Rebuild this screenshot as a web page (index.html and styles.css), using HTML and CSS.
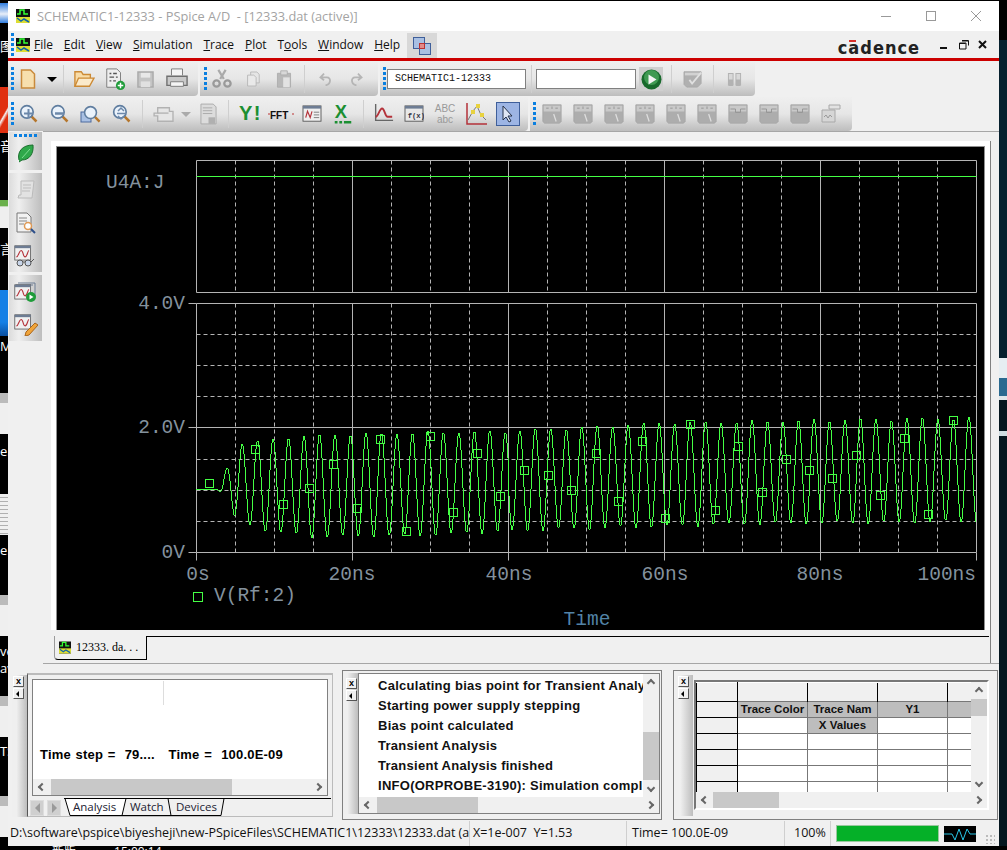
FILE: index.html
```html
<!DOCTYPE html>
<html lang="en">
<head>
    <meta charset="UTF-8">
    <meta name="viewport" content="width=device-width, initial-scale=1.0">
    <title>SCHEMATIC1-12333 - PSpice A/D</title>
    <link rel="stylesheet" href="styles.css">
</head>
<body>
    <svg class="defs" width="0" height="0">
        <symbol id="i-app" viewBox="0 0 14 14">
            <rect width="14" height="14" fill="#111"/>
            <path d="M1 5h3V1h4v4h4" fill="none" stroke="#3f3" stroke-width="1.5"/>
            <path d="M0 8h14v6H0z" fill="#dd3"/>
            <path d="M1 9l4 3 3-2 5 3" fill="none" stroke="#16a" stroke-width="1.5"/>
        </symbol>
        <symbol id="i-mag" viewBox="0 0 24 24">
            <path d="M14 14l7 7" stroke="#b5762c" stroke-width="3"/>
            <circle cx="9.500" cy="9.500" r="7.500" fill="#eaf2fb" stroke="#5f7d9f" stroke-width="2"/>
        </symbol>
        <symbol id="i-plot" viewBox="0 0 24 24">
            <rect x="1" y="1" width="20" height="18" fill="#f1f1f1" stroke="#555"/>
            <rect x="1" y="1" width="20" height="3" fill="#6d7c93"/>
            <path d="M3 15c3 0 3-8 6-8s2 8 5 8 3-8 5-8" fill="none" stroke="#b4323a" stroke-width="1.400"/>
        </symbol>
        <symbol id="i-meter" viewBox="0 0 24 24">
            <path d="M1 1h22v20l-2 2H3l-2-2z" fill="#adadad" stroke="#a6a6a6"/>
            <path d="M2 2h20v7H2z" fill="#c9c9c9"/>
            <path d="M12 3v3M5 5h3M16 5h3" stroke="#8e8e8e"/>
            <path d="M14 12l3 9" stroke="#dedede" stroke-width="1.500"/>
        </symbol>
        <symbol id="i-meter2" viewBox="0 0 24 24">
            <path d="M1 1h22v20l-2 2H3l-2-2z" fill="#adadad" stroke="#a6a6a6"/>
            <path d="M2 2h20v7H2z" fill="#c9c9c9"/>
            <path d="M3 6h6v4h6V6h6" fill="none" stroke="#8e8e8e"/>
        </symbol>
    </svg>

    <div class="screen">
        <div class="desk-left">
            <div class="bit blue-dot mt-3"></div>
            <div class="bit label mt-15">图</div>
            <div class="bit red-tile mt-33"></div>
            <div class="bit label mt-5">音</div>
            <div class="bit app-tile mt-46"></div>
            <div class="bit label mt-13">言</div>
            <div class="bit blue-tile mt-33"></div>
            <div class="bit label mt-2">M</div>
            <div class="bit page mt-39"></div>
            <div class="bit label mt-9">e.</div>
            <div class="bit page striped mt-35"></div>
            <div class="bit label mt-7">e.</div>
            <div class="bit page mt-37"></div>
            <div class="bit label mt-7">ve</div>
            <div class="bit label mt-1">av</div>
            <div class="bit page mt-20"></div>
            <div class="bit label mt-6">TS</div>
            <div class="bit page mt-37"></div>
        </div>

        <div class="window">
            <div class="titlebar">
                <svg class="title-icon"><use href="#i-app"/></svg>
                <span class="title-text">SCHEMATIC1-12333 - PSpice A/D&nbsp; - [12333.dat (active)]</span>
                <div class="win-buttons">
                    <svg width="12" height="12" viewBox="0 0 12 12"><path d="M1 6.500h10" stroke="#999"/></svg>
                    <svg width="12" height="12" viewBox="0 0 12 12"><rect x="1.500" y="1.500" width="9" height="9" fill="none" stroke="#999"/></svg>
                    <svg width="12" height="12" viewBox="0 0 12 12"><path d="M1 1l10 10M11 1L1 11" stroke="#999"/></svg>
                </div>
            </div>

            <div class="menubar">
                <span class="grip-v menu-grip"></span>
                <svg class="menu-icon"><use href="#i-app"/></svg>
                <nav class="menu">
                    <a><u>F</u>ile</a>
                    <a><u>E</u>dit</a>
                    <a><u>V</u>iew</a>
                    <a><u>S</u>imulation</a>
                    <a><u>T</u>race</a>
                    <a><u>P</u>lot</a>
                    <a>T<u>o</u>ols</a>
                    <a><u>W</u>indow</a>
                    <a><u>H</u>elp</a>
                </nav>
                <div class="mdi-restore">
                    <svg width="20" height="20" viewBox="0 0 20 20">
                        <rect x="1.500" y="1.500" width="11" height="11" fill="#a9c0e3" stroke="#3f5f9a"/>
                        <rect x="7.500" y="7.500" width="11" height="11" fill="#a9c0e3" stroke="#3f5f9a"/>
                        <rect x="7.500" y="7.500" width="5" height="5" fill="#e28a8a" stroke="#b33"/>
                    </svg>
                </div>
                <div class="cadence">c<span class="cad-a">a</span>dence</div>
                <div class="mdi-buttons">
                    <svg width="10" height="10" viewBox="0 0 10 10"><path d="M0 8h7" stroke="#111" stroke-width="2"/></svg>
                    <svg width="10" height="10" viewBox="0 0 10 10"><path d="M3 .500h6.500v5M.500 3h6.500v6H.500z" fill="none" stroke="#111"/><path d="M1 3.500h5.500M3 1h6" stroke="#111"/></svg>
                    <svg width="10" height="10" viewBox="0 0 10 10"><path d="M1 1l7 7M8 1L1 8" stroke="#111" stroke-width="2"/></svg>
                </div>
            </div>
            <div class="redline"></div>

            <div class="toolrow row-one">
                <div class="toolgroup w-190">
                    <span class="grip-v"></span>
                    <button class="tool t-pull2"><svg width="16" height="20" viewBox="0 0 16 20"><path d="M1.500 1h9l4 4v14h-13z" fill="#f7dfae" stroke="#c98a3c" stroke-width="1.500"/></svg></button>
                    <button class="tool drop"><span class="caret"></span></button>
                    <span class="sep sep-first"></span>
                    <button class="tool"><svg width="22" height="20" viewBox="0 0 24 22"><path d="M2 19V3h7l2 3h8v4" fill="#f8dca8" stroke="#cc8a35" stroke-width="1.500"/><path d="M2 19l4-9h17l-5 9z" fill="#fbeacb" stroke="#cc8a35" stroke-width="1.500"/></svg></button>
                    <button class="tool"><svg width="22" height="22" viewBox="0 0 24 24"><path d="M3 1h11l4 4v16H3z" fill="#eee" stroke="#777"/><path d="M6 6h2M10 6h4M6 10h5M13 10h2M6 14h2M10 14h3" stroke="#555" stroke-width="1.500"/><circle cx="18" cy="19" r="5" fill="#1f9c3a"/><path d="M15 19h6M18 16v6" stroke="#fff" stroke-width="1.600"/></svg></button>
                    <button class="tool"><svg width="17" height="17" viewBox="0 0 18 18"><path d="M1 1h16v16H1z" fill="#c4c4c4" stroke="#aaa" stroke-width="1.500"/><path d="M4 2h10v5H4z" fill="#e8e8e8"/><path d="M4 11h10v6H4z" fill="#e0e0e0"/></svg></button>
                    <button class="tool"><svg width="22" height="22" viewBox="0 0 24 24"><path d="M6 8V1h12v7" fill="#f5f5f5" stroke="#777"/><path d="M1 9h22v10H1z" fill="#c9c9c9" stroke="#6f6f6f" stroke-width="1.500"/><path d="M5 15h14v5H5z" fill="#f5f5f5" stroke="#777"/></svg></button>
                </div>
                <div class="toolgroup group-in w-178">
                    <span class="grip-v"></span>
                    <button class="tool t-pull1"><svg width="20" height="20" viewBox="0 0 22 22"><path d="M7 1l6 10M15 1L9 11" stroke="#aaa" stroke-width="2.500"/><circle cx="5" cy="16" r="3.500" fill="none" stroke="#9a9a9a" stroke-width="2.500"/><circle cx="17" cy="16" r="3.500" fill="none" stroke="#9a9a9a" stroke-width="2.500"/></svg></button>
                    <button class="tool"><svg width="14" height="16" viewBox="0 0 18 20"><path d="M6 1h8l3 3v11H6z" fill="#e5e5e5" stroke="#b0b0b0"/><path d="M2 5h8l3 3v11H2z" fill="#e9e9e9" stroke="#b0b0b0"/></svg></button>
                    <button class="tool"><svg width="16" height="18" viewBox="0 0 18 22"><path d="M1 4h16v17H1z" fill="#b8b8b8" stroke="#aaa"/><path d="M5 1h8v5H5z" fill="#d8d8d8" stroke="#aaa"/><path d="M8 9h8v12H8z" fill="#e2e2e2"/></svg></button>
                    <span class="sep"></span>
                    <button class="tool"><svg width="13" height="13" viewBox="0 0 18 18"><path d="M7 1L2 6l5 4M2 6h9c6 0 6 10-2 11" fill="none" stroke="#b5b5b5" stroke-width="2.500"/></svg></button>
                    <button class="tool"><svg width="13" height="13" viewBox="0 0 18 18"><path d="M11 1l5 5-5 4M16 6H7C1 6 1 16 9 17" fill="none" stroke="#b5b5b5" stroke-width="2.500"/></svg></button>
                </div>
                <div class="toolgroup w-375">
                    <span class="grip-v"></span>
                    <div class="combo combo-name">SCHEMATIC1-12333</div>
                    <span class="sep sep-combo"></span>
                    <div class="combo combo-empty"></div>
                    <button class="tool run"><svg width="21" height="21" viewBox="0 0 21 21"><circle cx="10.500" cy="10.500" r="10" fill="#186a2c"/><circle cx="10.500" cy="8.500" r="7.500" fill="#3f9a52"/><path d="M7.500 5.500l8 5-8 5z" fill="#f4f4f4"/></svg></button>
                    <span class="sep"></span>
                    <button class="tool"><svg width="20" height="18" viewBox="0 0 22 20"><path d="M1 2h19v13l-4 4H4l-3-3z" fill="#b0b0b0" stroke="#a8a8a8"/><path d="M2 3h17v3H2z" fill="#d2d2d2"/><path d="M7 11l3 4 10-12" fill="none" stroke="#e0e0e0" stroke-width="2"/></svg></button>
                    <span class="sep"></span>
                    <button class="tool"><svg width="15" height="15" viewBox="0 0 16 16"><path d="M1 1h6v13l-1 1H2l-1-1zM9 1h6v13l-1 1h-4l-1-1z" fill="#b2b2b2"/><path d="M2 2h4v6H2zM10 2h4v6h-4z" fill="#d8d8d8"/></svg></button>
                </div>
            </div>

            <div class="toolrow row-two">
                <div class="toolgroup w-520">
                    <span class="grip-v"></span>
                    <button class="tool t-pull1"><svg width="20" height="20"><use href="#i-mag"/><path d="M5 9.500h9M9.500 5v9" stroke="#6c88aa" stroke-width="2"/></svg></button>
                    <button class="tool"><svg width="20" height="20"><use href="#i-mag"/><path d="M5 9.500h9" stroke="#6c88aa" stroke-width="2.500"/></svg></button>
                    <button class="tool"><svg width="22" height="22" viewBox="0 0 22 22"><rect x="1" y="9" width="10" height="10" fill="#a9c0e3" stroke="#4c6a9e"/><use href="#i-mag" x="3" y="2" width="19" height="19"/></svg></button>
                    <button class="tool"><svg width="20" height="20"><use href="#i-mag"/><path d="M6 7l3-3 3 3M6 12l3 3 3-3M5 9.500h9" fill="none" stroke="#6c88aa" stroke-width="1.500"/></svg></button>
                    <span class="sep"></span>
                    <button class="tool"><svg width="22" height="18" viewBox="0 0 24 20"><path d="M1 9h4V3h13v4h4v11H5v-6H1z" fill="#e6e6e6" stroke="#b2b2b2" stroke-width="1.500"/><path d="M5 9h12" stroke="#b2b2b2" stroke-width="1.500"/></svg></button>
                    <button class="tool drop-two"><span class="caret caret-off"></span></button>
                    <button class="tool narrow"><svg width="17" height="22" viewBox="0 0 18 23"><path d="M1 1h13l3 3v18H1z" fill="#dcdcdc" stroke="#aaa"/><path d="M3 5h10M3 8h10M3 11h10" stroke="#aaa"/><path d="M9 15h7v7H9z" fill="#b0b0b0"/></svg></button>
                    <span class="sep"></span>
                    <button class="tool"><svg width="22" height="22" viewBox="0 0 24 22"><text class="ico-y" x="0" y="18">Y</text><text class="ico-y" x="16" y="18">!</text></svg></button>
                    <button class="tool"><svg width="26" height="14" viewBox="0 0 26 14"><path d="M0 7h26" stroke="#b33" stroke-dasharray="2 6"/><text class="ico-fft" x="2" y="12">FFT</text></svg></button>
                    <button class="tool"><svg width="20" height="18" viewBox="0 0 22 20"><rect x="1" y="1" width="20" height="17" fill="#efefef" stroke="#555"/><rect x="1" y="1" width="20" height="3" fill="#6d7c93"/><path d="M4 14l2-7 3 7 2-7" fill="none" stroke="#b4323a" stroke-width="1.300"/><path d="M13 8h6M13 11h6M13 14h6" stroke="#777"/></svg></button>
                    <button class="tool"><svg width="22" height="22" viewBox="0 0 24 24"><text class="ico-x" x="3" y="16">X</text><path d="M3 21h3M8 21h3M13 21h8" stroke="#1b8f32" stroke-width="2.500"/></svg></button>
                    <span class="sep sep-tight"></span>
                    <button class="tool"><svg width="22" height="22" viewBox="0 0 24 24"><path d="M4 1v18h19" fill="none" stroke="#666" stroke-width="1.500"/><path d="M4 15c3 0 4-9 7-9s3 9 6 9h5" fill="none" stroke="#b4323a" stroke-width="2"/></svg></button>
                    <button class="tool"><svg width="20" height="18" viewBox="0 0 22 20"><rect x="1" y="1" width="20" height="17" fill="#e8e8e8" stroke="#555"/><rect x="1" y="1" width="20" height="3" fill="#6d7c93"/><text class="ico-fx" x="4" y="14">f(x)</text></svg></button>
                    <button class="tool"><svg width="24" height="22" viewBox="0 0 24 22"><text class="ico-abc" x="12" y="9">ABC</text><text class="ico-abc" x="12" y="20">abc</text></svg></button>
                    <button class="tool"><svg width="24" height="24" viewBox="0 0 24 24"><path d="M3 1v21h20" fill="none" stroke="#b4323a" stroke-width="1.500"/><path d="M4 18l5-9 4-5 4 9 5 5" fill="none" stroke="#777"/><rect x="7" y="8" width="4" height="4" fill="#e8d23f"/><rect x="12" y="2" width="4" height="4" fill="#e8d23f"/><rect x="16" y="11" width="4" height="4" fill="#e8d23f"/></svg></button>
                    <button class="tool pointer"><svg width="12" height="18" viewBox="0 0 12 18"><path d="M1 1v14l3-3 3 5 2-1-3-5h4z" fill="#dfe6f4" stroke="#26324a"/></svg></button>
                </div>
                <div class="toolgroup w-322">
                    <span class="grip-v"></span>
                    <button class="tool"><svg width="20" height="20"><use href="#i-meter"/></svg></button>
                    <button class="tool"><svg width="20" height="20"><use href="#i-meter"/></svg></button>
                    <button class="tool"><svg width="20" height="20"><use href="#i-meter"/></svg></button>
                    <button class="tool"><svg width="20" height="20"><use href="#i-meter"/></svg></button>
                    <button class="tool"><svg width="20" height="20"><use href="#i-meter"/></svg></button>
                    <button class="tool"><svg width="20" height="20"><use href="#i-meter"/></svg></button>
                    <button class="tool"><svg width="20" height="20"><use href="#i-meter2"/></svg></button>
                    <button class="tool"><svg width="20" height="20"><use href="#i-meter2"/></svg></button>
                    <button class="tool"><svg width="20" height="20"><use href="#i-meter2"/></svg></button>
                    <button class="tool"><svg width="20" height="20" viewBox="0 0 20 20"><path d="M1 6h13v12H1z" fill="#d6d6d6" stroke="#a8a8a8"/><path d="M8 1h11v4H8z" fill="#e2e2e2" stroke="#a8a8a8"/><path d="M3 13l2-2 2 3 2-3 2 2" fill="none" stroke="#999"/></svg></button>
                </div>
            </div>

            <div class="main">
                <aside class="sidebar">
                    <span class="grip-h"></span>
                    <button class="side-tool"><svg width="18" height="19" viewBox="0 0 18 19"><path d="M2 16C0 8 5 1 16 1c1 9-4 15-11 15l-3 2" fill="#2fa84a" stroke="#1b6e2e"/><path d="M5 14L13 5" stroke="#7fdc92"/></svg></button>
                    <span class="side-sep"></span>
                    <button class="side-tool"><svg width="20" height="20" viewBox="0 0 20 20"><path d="M5 1h13l-2 17H2l1-3h2z" fill="#e2e2e2" stroke="#bbb"/><path d="M7 5h8M7 8h8M6 11h8" stroke="#bdbdbd"/></svg></button>
                    <button class="side-tool"><svg width="22" height="22" viewBox="0 0 22 22"><path d="M2 1h10l4 4v15H2z" fill="#f2f2f2" stroke="#777"/><path d="M4 6h8M4 9h8M4 12h5" stroke="#888"/><circle cx="13" cy="14" r="3.500" fill="#fff" stroke="#e09a55" stroke-width="1.500"/><path d="M16 17l4 4" stroke="#2c4f8a" stroke-width="2"/></svg></button>
                    <button class="side-tool"><svg width="24" height="22" viewBox="0 0 24 22"><use href="#i-plot" width="19" height="19"/><circle cx="6" cy="18" r="3" fill="#c9d6ea" stroke="#555"/><circle cx="14" cy="18" r="3" fill="#c9d6ea" stroke="#555"/><path d="M9 17h2M17 17l3-3" stroke="#555"/></svg></button>
                    <span class="side-sep"></span>
                    <button class="side-tool"><svg width="24" height="22" viewBox="0 0 24 22"><path d="M4 2h17v14M2 4h17" fill="none" stroke="#6d7c93"/><use href="#i-plot" y="3" width="19" height="19"/><circle cx="17" cy="16" r="5" fill="#1f9c3a"/><path d="M15.500 13.500l4 2.500-4 2.500z" fill="#fff"/></svg></button>
                    <button class="side-tool"><svg width="24" height="22" viewBox="0 0 24 22"><use href="#i-plot" width="19" height="19"/><path d="M21 9l3 2-9 10-4 1 1-4z" fill="#f0a43a" stroke="#a9651b"/></svg></button>
                </aside>

                <section class="mdi">
                    <div class="plot-frame">
                        <svg id="plot" class="plot" viewBox="57 147 927 483" width="927" height="483">
                            <g id="grid"></g>
                            <g id="trace"></g>
                            <text class="lbl" x="106" y="188">U4A:J</text>
                            <text class="lbl end" x="185" y="309">4.0V</text>
                            <text class="lbl end" x="185" y="433">2.0V</text>
                            <text class="lbl end" x="185" y="558">0V</text>
                            <text class="lbl mid" x="198" y="580">0s</text>
                            <text class="lbl mid" x="352" y="580">20ns</text>
                            <text class="lbl mid" x="509" y="580">40ns</text>
                            <text class="lbl mid" x="665" y="580">60ns</text>
                            <text class="lbl mid" x="820" y="580">80ns</text>
                            <text class="lbl end" x="976" y="580">100ns</text>
                            <rect class="marker" x="193.500" y="592.500" width="9" height="9"/>
                            <text class="lbl" x="214" y="601">V(Rf:2)</text>
                            <text class="lbl lbl-time mid" x="587" y="625">Time</text>
                        </svg>
                        <div class="tabstrip">
                            <div class="doc-tab">
                                <svg class="tab-icon"><use href="#i-app"/></svg>
                                <span>12333. da. . .</span>
                            </div>
                        </div>
                    </div>
                </section>
            </div>

            <div class="docks">
                <div class="dock dock-sim">
                    <div class="gutter">
                        <button class="mini">x</button>
                        <button class="mini mini-arrow"></button>
                    </div>
                    <div class="sim-body">
                        <div class="sim-box">
                            <div class="sim-view">
                                <span class="sim-rule"></span>
                                <p class="sim-text">Time step =&nbsp; 79....&nbsp;&nbsp; Time =&nbsp; 100.0E-09</p>
                            </div>
                            <div class="hscroll">
                                <span class="chev chev-l"></span>
                                <span class="thumb thumb-sim"></span>
                                <span class="chev chev-r"></span>
                            </div>
                        </div>
                        <div class="sim-tabs">
                            <span class="nav-btn"><i class="nav-l"></i></span>
                            <span class="nav-btn"><i class="nav-r"></i></span>
                            <svg class="sheet-tabs" width="267" height="19" viewBox="0 0 267 19">
                                <path d="M0 .500h267" stroke="#000"/>
                                <path d="M1 .500l5 17h52l4-17z" fill="#fff" stroke="#000"/>
                                <path d="M58 17.500h49M104 .500l3 17M107 17.500h50l3-17" fill="none" stroke="#000"/>
                                <text x="9" y="13">Analysis</text>
                                <text x="66" y="13">Watch</text>
                                <text x="112" y="13">Devices</text>
                            </svg>
                        </div>
                    </div>
                </div>

                <div class="dock dock-log">
                    <div class="gutter">
                        <button class="mini">x</button>
                        <button class="mini mini-arrow"></button>
                    </div>
                    <div class="log-box">
                        <div class="log-top">
                            <div class="log-lines">
                                <p>Calculating bias point for Transient Analy</p>
                                <p>Starting power supply stepping</p>
                                <p>Bias point calculated</p>
                                <p>Transient Analysis</p>
                                <p>Transient Analysis finished</p>
                                <p>INFO(ORPROBE-3190): Simulation compl</p>
                            </div>
                            <div class="vscroll">
                                <span class="chev chev-u"></span>
                                <span class="thumb-v thumb-log"></span>
                                <span class="chev chev-d"></span>
                            </div>
                        </div>
                        <div class="hscroll">
                            <span class="chev chev-l"></span>
                            <span class="thumb thumb-log-h"></span>
                            <span class="chev chev-r"></span>
                        </div>
                    </div>
                </div>

                <div class="dock dock-probe">
                    <div class="gutter gutter-wide">
                        <button class="mini">x</button>
                        <button class="mini mini-arrow"></button>
                    </div>
                    <div class="probe-box">
                        <div class="probe-top">
                            <div class="sheet">
                                <table>
                                    <tr class="r-top"><th class="rh"></th><th class="ch"></th><th class="ch"></th><th class="ch"></th><th class="ch"></th></tr>
                                    <tr><th class="rh"></th><td class="gr">Trace Color</td><td class="gr">Trace Nam</td><td class="gr">Y1</td><td class="gr"></td></tr>
                                    <tr><th class="rh"></th><td></td><td class="gr">X Values</td><td></td><td></td></tr>
                                    <tr><th class="rh"></th><td></td><td></td><td></td><td></td></tr>
                                    <tr><th class="rh"></th><td></td><td></td><td></td><td></td></tr>
                                    <tr><th class="rh"></th><td></td><td></td><td></td><td></td></tr>
                                    <tr><th class="rh"></th><td></td><td></td><td></td><td></td></tr>
                                </table>
                            </div>
                            <div class="vscroll">
                                <span class="chev chev-u"></span>
                                <span class="thumb-v thumb-probe"></span>
                                <span class="chev chev-d"></span>
                            </div>
                        </div>
                        <div class="hscroll">
                            <span class="chev chev-l"></span>
                            <span class="thumb thumb-probe-h"></span>
                            <span class="chev chev-r"></span>
                        </div>
                    </div>
                </div>
            </div>

            <footer class="statusbar">
                <span class="st st-path">D:\software\pspice\biyesheji\new-PSpiceFiles\SCHEMATIC1\12333\12333.dat (a</span>
                <span class="st st-xy">X=1e-007&nbsp; Y=1.53</span>
                <span class="st st-time">Time= 100.0E-09</span>
                <span class="st st-pct">100%</span>
                <span class="st-bar"></span>
                <svg class="st-pulse" width="32" height="16" viewBox="0 0 32 16"><rect width="32" height="16" fill="#000"/><path d="M0 8h8l3 6 4-11 4 11 4-11 3 5h6" fill="none" stroke="#29c5e6"/></svg>
                <span class="st-resize"></span>
            </footer>
        </div>

        <div class="desk-right"></div>
    </div>
    <div class="taskbar"><span>新版</span><span class="task-time">15:00:14</span></div>

    <script src="chart.js"></script>
</body>
</html>
```

FILE: styles.css
```css
:root {
    --face: #f0f0f0;
    --line: #808080;
    --thumb: #c8c8c8;
    --trace: #44ff44;
}
* {
    box-sizing: border-box;
    margin: 0;
    padding: 0;
}
html, body {
    background: #000;
    overflow: hidden;
}
body {
    width: 1007px;
    height: 850px;
    font-family: "Open Sans", "Noto Sans CJK SC", sans-serif;
}
.defs {
    position: absolute;
}
.screen {
    display: flex;
    height: 846px;
}

/* desktop showing behind the window */
.desk-left {
    width: 8px;
    flex: none;
    overflow: hidden;
    display: flex;
    flex-direction: column;
}
.bit {
    flex: none;
}
.mt-1 { margin-top: 1px; }
.mt-2 { margin-top: 2px; }
.mt-3 { margin-top: 3px; }
.mt-5 { margin-top: 5px; }
.mt-6 { margin-top: 6px; }
.mt-7 { margin-top: 7px; }
.mt-9 { margin-top: 9px; }
.mt-13 { margin-top: 13px; }
.mt-15 { margin-top: 15px; }
.mt-20 { margin-top: 20px; }
.mt-33 { margin-top: 33px; }
.mt-35 { margin-top: 35px; }
.mt-37 { margin-top: 37px; }
.mt-39 { margin-top: 39px; }
.mt-46 { margin-top: 46px; }
.label {
    color: #fff;
    font-size: 13px;
    line-height: 16px;
    white-space: nowrap;
}
.blue-dot {
    height: 20px;
    background: linear-gradient(#2f7de0, #e8eef8 55%, #2f7de0);
}
.red-tile {
    height: 46px;
    background: linear-gradient(120deg, #e03010 55%, #f4f4f4 60%, #e03010 70%);
}
.app-tile {
    height: 28px;
    background: linear-gradient(#6ab04c 20%, #efefef 25%);
}
.blue-tile {
    height: 46px;
    background: linear-gradient(#1580e6 70%, #0a4fa0);
}
.page {
    height: 41px;
    background: linear-gradient(#bbb 10px, #efefef 10px);
}
.striped {
    background: repeating-linear-gradient(#f0f0f0 0 3px, #b0b0b0 3px 4px);
}
.desk-right {
    width: 8px;
    flex: none;
    background: linear-gradient(#000 0 40px, #06202e 40px 358px, #e6eef2 358px 378px, #2a6a90 378px 396px, #dde6ea 396px 400px, #05161f 400px 431px, #cfdde2 431px 436px, #05161f 436px);
}
.taskbar {
    height: 4px;
    overflow: hidden;
    color: #fff;
    font-size: 12px;
    line-height: 12px;
    padding-left: 52px;
}
.task-time {
    margin-left: 38px;
}

/* window chrome */
.window {
    width: 991px;
    flex: none;
    overflow: hidden;
    margin-top: 1px;
    display: flex;
    flex-direction: column;
    background: var(--face);
}
.titlebar {
    height: 30px;
    flex: none;
    background: #fff;
    display: flex;
    align-items: center;
    color: #a3a3a3;
    font-size: 12.800px;
}
.title-icon {
    width: 14px;
    height: 14px;
    margin: 0 7px 0 8px;
}
.win-buttons {
    margin-left: auto;
    display: flex;
    gap: 33px;
    padding-right: 17px;
}
.menubar {
    height: 27px;
    flex: none;
    display: flex;
    align-items: center;
    color: #111;
    font-size: 12px;
}
.grip-v {
    width: 3px;
    height: 24px;
    flex: none;
    background: repeating-linear-gradient(#0a7fe0 0 3px, transparent 3px 5px);
}
.menu-grip {
    margin-left: 3px;
}
.menu-icon {
    width: 14px;
    height: 14px;
    margin-left: 2px;
}
.menu {
    display: flex;
    gap: 10.800px;
    margin-left: 4px;
}
.mdi-restore {
    width: 30px;
    height: 25px;
    align-self: flex-end;
    margin-left: 7px;
    display: flex;
    align-items: center;
    justify-content: center;
    background: #d8d8d8;
}
.cadence {
    margin-left: auto;
    font-family: "DejaVu Sans Condensed", "Liberation Sans", sans-serif;
    font-weight: bold;
    font-size: 18px;
    letter-spacing: 1px;
    color: #222;
    padding-top: 6px;
}
.cad-a {
    position: relative;
}
.cad-a::before {
    content: "";
    position: absolute;
    left: 1px;
    top: 3px;
    width: 7px;
    height: 2px;
    background: #d8322c;
}
.mdi-buttons {
    display: flex;
    gap: 9px;
    margin-left: 20px;
    padding: 5px 11px 0 0;
    align-items: flex-start;
    height: 20px;
}
.redline {
    height: 3px;
    flex: none;
    background: #cc0000;
}

/* toolbars */
.toolrow {
    display: flex;
    flex: none;
    height: 34px;
    margin-top: 1px;
    gap: 2px;
}
.toolgroup {
    display: flex;
    align-items: center;
    padding-left: 3px;
    background: linear-gradient(#efefef, #e6e6e6 50%, #bdbdbd);
    border-radius: 0 0 4px 0;
}
.group-in {
    padding-left: 4px;
}
.w-190 { width: 190px; }
.w-178 { width: 178px; }
.w-375 { width: 375px; }
.w-520 { width: 520px; }
.w-322 { width: 322px; }
.tool {
    width: 31px;
    height: 30px;
    flex: none;
    border: none;
    background: none;
    display: flex;
    align-items: center;
    justify-content: center;
}
.t-pull1 {
    margin-left: -1px;
}
.t-pull2 {
    margin-left: -2px;
}
.drop {
    width: 17px;
}
.drop-two {
    width: 14px;
}
.narrow {
    width: 30px;
}
.caret {
    width: 0;
    height: 0;
    border: 5px solid transparent;
    border-top: 5px solid #000;
    border-bottom: none;
}
.caret-off {
    border-top-color: #aaa;
}
.sep {
    width: 1px;
    height: 28px;
    flex: none;
    margin: 0 5px;
    background: #cfcfcf;
}
.sep-first {
    margin: 0 4px 0 3px;
}
.sep-tight {
    margin-right: 3px;
}
.sep-combo {
    margin-right: 4px;
}
.combo {
    height: 20px;
    flex: none;
    background: #fff;
    border: 1px solid var(--line);
    font-family: "Liberation Mono", monospace;
    font-size: 10px;
    line-height: 18px;
    padding-left: 7px;
    color: #111;
}
.combo-name {
    width: 139px;
    margin-left: 1px;
}
.combo-empty {
    width: 100px;
}
.run {
    width: 24px;
    height: 24px;
    margin: 0 3px;
    background: #cfcfcf;
}
.pointer {
    width: 24px;
    height: 24px;
    margin-left: 5px;
    background: #9db5e4;
    border: 1px solid #3f5f9a;
}
.ico-y {
    font: bold 22px "Liberation Sans", sans-serif;
    fill: #1b8f32;
}
.ico-fft {
    font: bold 10px "Liberation Sans", sans-serif;
    fill: #111;
}
.ico-x {
    font: bold 20px "Liberation Sans", sans-serif;
    fill: #1b8f32;
}
.ico-fx {
    font: bold 8px "Liberation Mono", monospace;
    fill: #334;
}
.ico-abc {
    font: 10px "Liberation Sans", sans-serif;
    fill: #999;
    text-anchor: middle;
}

/* left tool strip and plot area */
.main {
    height: 533px;
    flex: none;
    display: flex;
}
.sidebar {
    width: 33px;
    height: 209px;
    margin: 1px 0 0 1px;
    flex: none;
    display: flex;
    flex-direction: column;
    align-items: center;
    background: linear-gradient(90deg, #dcdcdc, #efefef 30%, #bdbdbd);
}
.grip-h {
    width: 23px;
    height: 3px;
    margin-top: 2px;
    background: repeating-linear-gradient(90deg, #0a7fe0 0 3px, transparent 3px 5px);
}
.side-tool {
    width: 32px;
    height: 33px;
    flex: none;
    border: none;
    background: none;
    display: flex;
    align-items: center;
    justify-content: center;
}
.side-sep {
    width: 100%;
    height: 3px;
    flex: none;
    background: var(--face);
}
.mdi {
    flex: 1;
    margin-left: 1px;
    border-top: 1px solid #a6a6a6;
    border-bottom: 1px solid #a6a6a6;
    padding: 9px 8px 0;
}
.plot-frame {
    background: #fff;
    padding: 6px 6px 0;
    border-right: 1px solid var(--line);
}
.plot {
    display: block;
    background: #000;
    outline: 1px solid #8f8f8f;
}
.tabstrip {
    height: 33px;
    margin: 0 -6px;
    background: var(--face);
    padding: 6px 0 0 3px;
    position: relative;
}
.tabstrip::before {
    content: "";
    position: absolute;
    left: 96px;
    right: 1px;
    top: 6px;
    height: 1px;
    background: #000;
}
.doc-tab {
    width: 93px;
    height: 24px;
    display: flex;
    align-items: center;
    gap: 5px;
    padding-left: 4px;
    font-family: "Liberation Serif", serif;
    font-size: 12px;
    background: var(--face);
    border-left: 1px solid #9a9a9a;
    border-right: 1px solid #000;
    border-bottom: 1px solid #000;
    border-radius: 0 0 0 4px;
}
.tab-icon {
    width: 12px;
    height: 15px;
}
.lbl {
    font-family: "Liberation Mono", monospace;
    font-size: 19.500px;
    fill: #84929e;
}
.lbl-time {
    fill: #5283a6;
}
.end {
    text-anchor: end;
}
.mid {
    text-anchor: middle;
}
.marker {
    fill: none;
    stroke: var(--trace);
    shape-rendering: crispEdges;
}

/* docked panes */
.docks {
    height: 157px;
    flex: none;
    display: flex;
    align-items: flex-start;
}
.dock {
    display: flex;
    flex: none;
}
.gutter {
    width: 15px;
    flex: none;
    padding: 5px 0 0 3px;
    display: flex;
    flex-direction: column;
    gap: 1px;
    background: linear-gradient(90deg, #efefef 30%, #bdbdbd);
}
.gutter-wide {
    width: 18px;
    height: 141px;
    margin-top: 4px;
    padding: 1px 0 0 3px;
}
.mini {
    width: 11px;
    height: 11px;
    border: 1px solid;
    border-color: #fff #555 #555 #fff;
    background: var(--face);
    font: bold 9px/7px "Liberation Sans", sans-serif;
    padding: 0;
    overflow: hidden;
    flex: none;
}
.mini-arrow {
    position: relative;
}
.mini-arrow::before {
    content: "";
    position: absolute;
    left: 2px;
    top: 2px;
    border: 3px solid transparent;
    border-left: none;
    border-right: 3px solid #000;
}
.dock-sim {
    margin: 9px 0 0 4px;
    width: 319px;
    height: 144px;
}
.dock-sim .gutter {
    margin-top: 2px;
    padding: 1px 0 0 1px;
}
.sim-body {
    flex: 1;
    border: 1px solid #bbb;
    border-top-width: 2px;
    border-left-color: #555;
    display: flex;
    flex-direction: column;
    padding: 4px 4px 0 4px;
}
.sim-box {
    height: 117px;
    flex: none;
    border: 1px solid var(--line);
    background: #fff;
    display: flex;
    flex-direction: column;
}
.sim-view {
    flex: 1;
    position: relative;
    overflow: hidden;
}
.sim-rule {
    position: absolute;
    left: 130px;
    top: 1px;
    width: 1px;
    height: 24px;
    background: #ddd;
}
.sim-text {
    position: absolute;
    left: 7px;
    top: 67px;
    white-space: pre;
    font: bold 13px/16px "Liberation Sans", sans-serif;
    letter-spacing: .2px;
    word-spacing: .8px;
    color: #000;
}
.sim-tabs {
    display: flex;
    height: 19px;
    margin: 2px -3px 0 -2px;
    gap: 3px;
}
.nav-btn {
    width: 14px;
    height: 16px;
    margin-top: 2px;
    background: #cfcfcf;
    border: 1px solid #ddd;
    display: flex;
    align-items: center;
    justify-content: center;
}
.nav-l {
    border: 5px solid transparent;
    border-left: none;
    border-right: 5px solid #9a9a9a;
}
.nav-r {
    border: 5px solid transparent;
    border-right: none;
    border-left: 5px solid #9a9a9a;
}
.sheet-tabs text {
    font-size: 11.500px;
    fill: #223;
}
.dock-log {
    margin: 6px 0 0 11px;
    width: 320px;
    height: 150px;
    border: 1px solid var(--line);
    padding-top: 2px;
}
.dock-log .gutter {
    height: 141px;
}
.log-box {
    width: 302px;
    height: 141px;
    border: 1px solid var(--line);
    background: #fff;
    display: flex;
    flex-direction: column;
}
.log-top {
    flex: 1;
    display: flex;
    min-height: 0;
}
.log-lines {
    flex: 1;
    padding: 2px 0 0 19px;
    overflow: hidden;
    font: bold 13px/20px "Liberation Sans", sans-serif;
    letter-spacing: .27px;
    white-space: nowrap;
    color: #111;
}
.vscroll {
    width: 16px;
    flex: none;
    display: flex;
    flex-direction: column;
    background: var(--face);
    position: relative;
}
.thumb-v {
    position: absolute;
    left: 0;
    right: 0;
    background: var(--thumb);
}
.thumb-log {
    top: 58px;
    height: 48px;
}
.thumb-probe {
    top: 17px;
    height: 17px;
}
.hscroll {
    height: 16px;
    flex: none;
    position: relative;
    background: var(--face);
}
.thumb {
    position: absolute;
    top: 0;
    bottom: 0;
    background: var(--thumb);
}
.thumb-sim {
    left: 18px;
    width: 181px;
}
.thumb-log-h {
    left: 18px;
    width: 101px;
}
.thumb-probe-h {
    left: 17px;
    width: 66px;
}
.chev {
    position: absolute;
    width: 6px;
    height: 6px;
    border-left: 2px solid #666;
    border-top: 2px solid #666;
}
.chev-l { left: 6px; top: 5px; transform: rotate(-45deg); }
.chev-r { right: 6px; top: 5px; transform: rotate(135deg); }
.chev-u { top: 6px; left: 5px; transform: rotate(45deg); }
.chev-d { bottom: 6px; left: 5px; transform: rotate(225deg); }

.dock-probe {
    margin: 6px 0 0 11px;
    width: 325px;
    height: 150px;
    border: 1px solid var(--line);
    padding-left: 1px;
}
.probe-box {
    width: 295px;
    height: 130px;
    margin: 9px 0 0 1px;
    border: 2px solid #777;
    border-right-color: #fff;
    border-bottom-color: #fff;
    display: flex;
    flex-direction: column;
    background: var(--face);
}
.probe-top {
    flex: 1;
    display: flex;
    min-height: 0;
}
.sheet {
    flex: 1;
    overflow: hidden;
    background: #fff;
}
.sheet table {
    border-collapse: collapse;
    table-layout: fixed;
    width: 290px;
}
.sheet th, .sheet td {
    height: 16px;
    width: 70px;
    border: 1px solid #777;
    font: bold 11.500px/13px "Liberation Sans", sans-serif;
    text-align: center;
    white-space: nowrap;
    overflow: hidden;
    color: #111;
}
.sheet .rh {
    width: 41px;
    background: var(--face);
    border-color: #000;
    border-top-color: #fff;
}
.sheet .ch {
    background: var(--face);
    border-color: #000;
    border-top: none;
    border-bottom: none;
}
.r-top th {
    height: 19px;
}
.sheet .gr {
    background: #bdbdbd;
}

/* status bar */
.statusbar {
    height: 25px;
    flex: none;
    display: flex;
    align-items: center;
    font-size: 12.500px;
    color: #111;
    white-space: nowrap;
}
.st {
    flex: none;
    overflow: hidden;
    height: 25px;
    line-height: 24px;
    border-right: 1px solid #cfcfcf;
}
.st-path {
    width: 462px;
    padding-left: 2px;
}
.st-xy {
    width: 157px;
    padding-left: 3px;
}
.st-time {
    width: 158px;
    padding-left: 5px;
}
.st-pct {
    width: 46px;
    padding-left: 9px;
}
.st-bar {
    width: 103px;
    height: 17px;
    margin-left: 5px;
    flex: none;
    background: #05b028;
    border: 1px solid #9ac89e;
}
.st-pulse {
    margin-left: 5px;
    flex: none;
}
.st-resize {
    width: 10px;
    height: 10px;
    margin: 10px 0 0 9px;
    background: radial-gradient(#bbb 1px, transparent 1.500px) 0 0 / 4px 4px;
}
```

FILE: chart.js
```js
// draws the grid, the probe trace and its markers into the plot svg
const NS = 'http://www.w3.org/2000/svg';
const X0 = 196, X1 = 976, PX_PER_NS = 7.8;
const GREEN = '#44ff44';

function add(parent, tag, attrs) {
    const el = document.createElementNS(NS, tag);
    for (const k in attrs) el.setAttribute(k, attrs[k]);
    parent.appendChild(el);
    return el;
}

function line(parent, x1, y1, x2, y2, dashed, color) {
    add(parent, 'line', {
        x1: x1 + .5, y1: y1 + .5, x2: x2 + .5, y2: y2 + .5,
        stroke: color || '#b4b4b4',
        'stroke-dasharray': dashed ? '4 3' : 'none'
    });
}

// piecewise linear lookup
function lerp(table, t) {
    for (let i = 1; i < table.length; i++) {
        if (t <= table[i][0]) {
            const a = table[i - 1], b = table[i];
            return a[1] + (b[1] - a[1]) * (t - a[0]) / (b[0] - a[0]);
        }
    }
    return table[table.length - 1][1];
}

const grid = document.getElementById('grid');
const trace = document.getElementById('trace');

// top plot and bottom plot boxes
[[160, 292], [303, 552]].forEach(([top, bottom]) => {
    for (let i = 1; i < 20; i++) {
        const x = Math.round(X0 + i * 39);
        line(grid, x, top, x, bottom, i % 4 !== 0);
    }
    line(grid, X0, top, X1, top);
    line(grid, X0, bottom, X1, bottom);
    line(grid, X0, top, X0, bottom);
    line(grid, X1, top, X1, bottom);
});

[334, 365, 396, 459, 490, 521].forEach(y => line(grid, X0, y, X1, y, true));
line(grid, X0, 427, X1, 427);

// axis ticks
[303, 427, 552].forEach(y => line(grid, 188, y, X0, y));
[196, 352, 508, 664, 820, 976].forEach(x => line(grid, x, 552, x, 560));

line(trace, X0, 176, X1, 176, false, GREEN);

const tops = [[0, 489], [2.5, 489], [3.9, 468], [5.9, 443], [8, 441], [12, 437], [20, 434], [40, 431], [60, 423], [80, 420], [100, 418]];
const bots = [[0, 489], [2.9, 490], [4.9, 516], [6.9, 525], [9, 531], [13, 535], [15, 537], [30, 535], [40, 531], [60, 526], [80, 523], [100, 522]];
const PERIOD = 15.46 / PX_PER_NS;

let pts = '';
for (let t = 0; t <= 100; t += .128) {
    const top = lerp(tops, t), bot = lerp(bots, t);
    const mid = (top + bot) / 2;
    const amp = (bot - top) / 2 * (1 + .025 * Math.sin(t * .9));
    const y = mid - amp * Math.cos(2 * Math.PI * (t - 5.9) / PERIOD);
    pts += Math.round(X0 + t * PX_PER_NS) + ',' + Math.round(y) + ' ';
}
add(trace, 'polyline', { points: pts, fill: 'none', stroke: GREEN, 'shape-rendering': 'crispEdges' });

const markers = [[210, 484], [256, 450], [284, 505], [310, 489], [334, 465], [358, 509], [381, 440], [407, 532],
    [431, 437], [454, 513], [478, 454], [501, 497], [525, 471], [549, 476], [572, 491], [597, 454], [619, 502],
    [643, 442], [666, 519], [691, 425], [716, 511], [739, 447], [763, 493], [787, 460], [810, 471], [833, 479],
    [857, 456], [881, 496], [905, 439], [929, 515], [954, 421]];
markers.forEach(([x, y]) => {
    add(trace, 'rect', { x: x - 4.5, y: y - 4.5, width: 8, height: 8, class: 'marker' });
});
```
